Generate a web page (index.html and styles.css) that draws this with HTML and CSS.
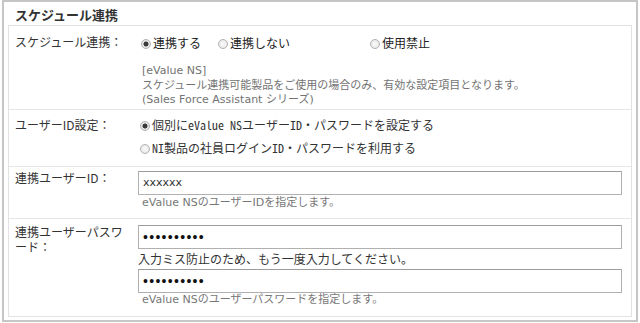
FILE: index.html
```html
<!DOCTYPE html>
<html lang="ja">
<head>
<meta charset="utf-8">
<title>スケジュール連携</title>
<link rel="stylesheet" href="styles.css">
</head>
<body>
<div class="frame">
  <h2 class="title">スケジュール連携</h2>
  <div class="table">
    <div class="row r1">
      <div class="label">スケジュール連携：</div>
      <div class="field">
        <div class="radios">
          <label class="opt w1"><input class="radio" type="radio" name="sync" checked><span>連携する</span></label><label class="opt w2"><input class="radio" type="radio" name="sync"><span>連携しない</span></label><label class="opt"><input class="radio" type="radio" name="sync"><span>使用禁止</span></label>
        </div>
        <p class="note">[eValue NS]<br>スケジュール連携可能製品をご使用の場合のみ、有効な設定項目となります。<br>(Sales Force Assistant シリーズ)</p>
      </div>
    </div>
    <div class="row r2">
      <div class="label">ユーザーID設定：</div>
      <div class="field">
        <label class="line"><input class="radio" type="radio" name="uid" checked><span>個別にeValue NSユーザーID・パスワードを設定する</span></label>
        <label class="line"><input class="radio" type="radio" name="uid"><span>NI製品の社員ログインID・パスワードを利用する</span></label>
      </div>
    </div>
    <div class="row r3">
      <div class="label">連携ユーザーID：</div>
      <div class="field">
        <input class="box" type="text" value="xxxxxx">
        <p class="help">eValue NSのユーザーIDを指定します。</p>
      </div>
    </div>
    <div class="row r4">
      <div class="label">連携ユーザーパスワード：</div>
      <div class="field">
        <input class="box pw" type="password" value="xxxxxxxxxx">
        <p class="retype">入力ミス防止のため、もう一度入力してください。</p>
        <input class="box pw" type="password" value="xxxxxxxxxx">
        <p class="help">eValue NSのユーザーパスワードを指定します。</p>
      </div>
    </div>
  </div>
</div>
</body>
</html>
```
FILE: styles.css
```css
html, body {
  margin: 0;
  padding: 0;
}
body {
  width: 640px;
  height: 323px;
  overflow: hidden;
  background: #fff;
  font-family: "Noto Sans CJK JP", sans-serif;
  color: #333;
}
.frame {
  margin: 0 2px;
  border: 2px solid #c6c6c6;
  padding: 0 4px 3px 4px;
}
.title {
  margin: 0;
  padding: 3px 0 0 7px;
  font-size: 13px;
  line-height: 20px;
  font-weight: bold;
  color: #333;
}
.table {
  border: 1px solid #e2e2e2;
}
.row {
  display: grid;
  grid-template-columns: 129px 1fr;
  border-top: 1px solid #e6e6e6;
}
.row.r1 {
  border-top: none;
}
.label {
  padding: 0 12px 0 6px;
  font-size: 12px;
  line-height: 18px;
  color: #333;
}
.field {
  padding-right: 9px;
  font-size: 12px;
  color: #222;
}
.radio {
  appearance: none;
  -webkit-appearance: none;
  box-sizing: border-box;
  width: 10px;
  height: 10px;
  margin: 0 2px 0 0;
  border: 1px solid #b2b2b2;
  border-radius: 50%;
  background: radial-gradient(circle, #fbfbfb 0, #e2e2e2 100%);
  vertical-align: -1px;
}
.radio:checked {
  background: radial-gradient(circle, #3a3a3a 0, #3a3a3a 2.2px, #e6e6e6 2.8px);
}

/* row 1 */
.r1 .label { padding-top: 7px; }
.r1 .field { padding-top: 7px; padding-bottom: 1px; }
.radios {
  display: flex;
  line-height: 20px;
  padding-left: 3px;
}
.opt { display: block; white-space: nowrap; }
.opt.w1 { width: 77px; }
.opt.w2 { width: 152px; }
.note {
  margin: 11px 0 0 4px;
  font-size: 11px;
  line-height: 14.5px;
  color: #737373;
  font-family: "DejaVu Sans", "Noto Sans CJK JP", sans-serif;
}

/* row 2 */
.r2 .label { padding-top: 6px; }
.r2 .field { padding: 3.5px 9px 6.5px 2px; }
.line {
  display: block;
  line-height: 23px;
  white-space: nowrap;
  font-family: "Noto Sans Mono CJK JP", "Noto Sans CJK JP", monospace;
  color: #333;
}

/* row 3 */
.r3 .label { padding-top: 2px; }
.r3 .field { padding-top: 4px; padding-bottom: 8px; }
.box {
  display: block;
  box-sizing: border-box;
  width: 100%;
  height: 24px;
  margin: 0;
  padding: 0 4px;
  border: 1px solid #b0b0b0;
  border-top-color: #9c9c9c;
  border-radius: 0;
  background: #fff;
  font-family: "DejaVu Sans", "Noto Sans CJK JP", sans-serif;
  font-size: 11px;
  color: #333;
  outline: none;
}
.box.pw {
  font-family: "Liberation Sans", sans-serif;
  font-size: 14px;
  letter-spacing: 1.3px;
  color: #111;
}
.help {
  margin: 1px 0 0 4px;
  font-size: 11px;
  line-height: 14px;
  color: #777;
  font-family: "DejaVu Sans", "Noto Sans CJK JP", sans-serif;
}

/* row 4 */
.r4 .label { padding-top: 5.5px; line-height: 15px; }
.r4 .field { padding-top: 6px; padding-bottom: 9px; }
.r4 .help { margin-top: 0; }
.retype {
  margin: 0;
  font-size: 12px;
  line-height: 20px;
  color: #333;
}
```
